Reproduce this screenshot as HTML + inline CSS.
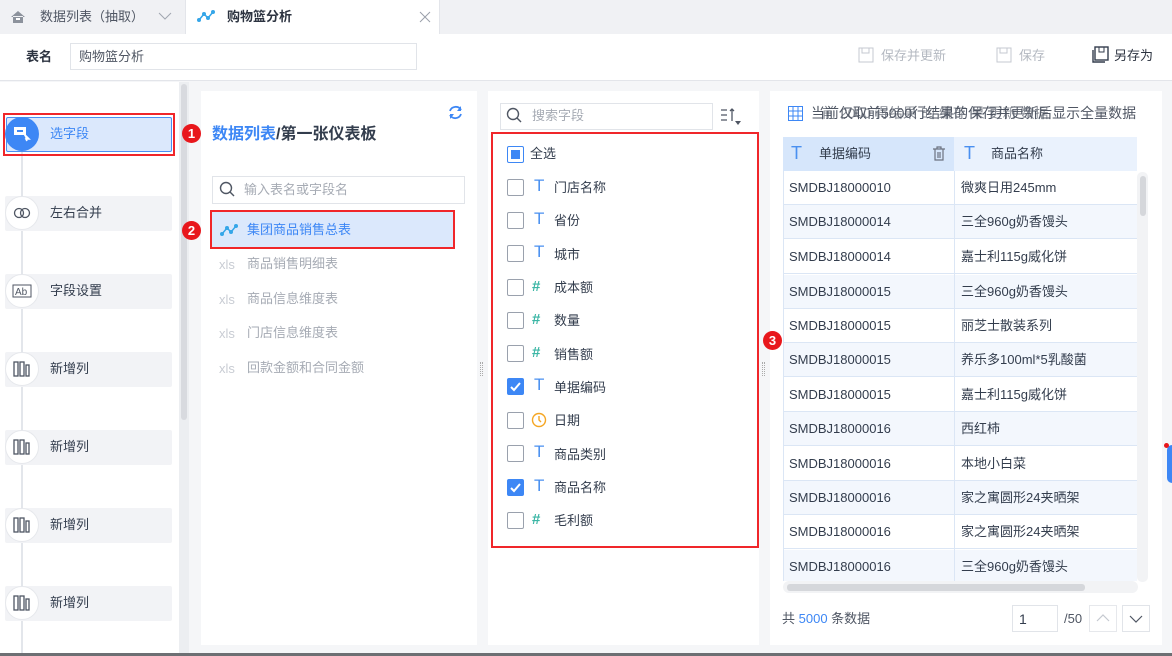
<!DOCTYPE html>
<html><head><meta charset="utf-8"><style>
*{box-sizing:border-box;margin:0;padding:0}
body{width:1172px;height:656px;overflow:hidden;position:relative;background:#f5f6f8;font-family:"Liberation Sans","Noto Sans CJK SC",sans-serif;font-size:13px;line-height:16px;color:#333d4d}
.a{position:absolute}
.tabbar{left:0;top:0;width:1172px;height:34px;background:#f0f1f4}
.hdr{left:0;top:34px;width:1172px;height:47px;background:#fff;border-bottom:1px solid #e3e5ea}
.step{left:5px;width:167px;height:35px;background:#f2f3f6;border-radius:2px}
.circ{left:5px;width:34px;height:34px;border-radius:50%;background:#fff;border:1px solid #e6e8ec;display:flex;align-items:center;justify-content:center}
.slab{left:50px;font-size:13px;color:#333d4d}
.red{border:2px solid #f0262a}
.badge{width:19px;height:19px;border-radius:50%;background:#e8171c;color:#fff;font-size:13px;text-align:center;line-height:19px;font-weight:bold;z-index:5}
.cb{left:507px;width:17px;height:17px;border:1px solid #9aa1ad;border-radius:2px;background:#fff}
.cbk{background:#3d87f5;border-color:#3d87f5}
.ti{left:534px;font-size:17px;color:#4a90f0;font-family:"Liberation Sans",sans-serif}
.hs{left:532px;font-size:15px;color:#3bb6a5;font-weight:bold}
.fl{left:554px;color:#333d4d}
.row{left:783px;width:354px;height:34px;border-bottom:1px solid #dbe6f5}
.row span{position:absolute;top:9px}
.xl{left:219px;color:#c8ccd3;font-size:13px}
.xt{left:247px;color:#a6abb4}
</style></head><body>
<div class="a tabbar"></div>
<div class="a" style="left:0;top:0;width:186px;height:34px;background:#f0f1f4;border-right:1px solid #e3e5ea"></div>
<svg class="a" style="left:10px;top:10px" width="16" height="14"><path d="M1 7 L8 1 L15 7 M3 6 V13 H13 V6" fill="#8c929c"/><rect x="6" y="8" width="4" height="2" fill="#fff"/></svg>
<div class="a" style="left:40px;top:9px;color:#4f5663">数据列表（抽取）</div>
<svg class="a" style="left:158px;top:12px" width="14" height="9"><path d="M1 1 L7 7 L13 1" stroke="#a0a6b0" fill="none"/></svg>
<div class="a" style="left:186px;top:0;width:254px;height:34px;background:#fff;border-right:1px solid #e3e5ea"></div>
<svg class="a" style="left:197px;top:9px" width="18" height="14"><path d="M2 11 L7 5 L11 9 L16 3" stroke="#35a6e8" stroke-width="1.5" fill="none"/><circle cx="2" cy="11" r="2" fill="#35a6e8"/><circle cx="7" cy="5" r="2" fill="#35a6e8"/><circle cx="11" cy="9" r="2" fill="#35a6e8"/><circle cx="16" cy="3" r="2" fill="#35a6e8"/></svg>
<div class="a" style="left:227px;top:9px;font-weight:bold;color:#2c3340">购物篮分析</div>
<svg class="a" style="left:419px;top:11px" width="12" height="12"><path d="M1 1 L11 11 M11 1 L1 11" stroke="#9aa0aa"/></svg>

<div class="a hdr"></div>
<div class="a" style="left:26px;top:49px;font-weight:bold;color:#2c3340">表名</div>
<div class="a" style="left:70px;top:43px;width:347px;height:27px;border:1px solid #e1e4e9;padding:5px 8px;color:#4f5663">购物篮分析</div>
<svg class="a" style="left:858px;top:47px" width="16" height="16"><rect x="1" y="1" width="14" height="14" fill="none" stroke="#c5c9d0"/><rect x="4" y="1" width="7" height="5" fill="none" stroke="#c5c9d0"/></svg>
<div class="a" style="left:881px;top:48px;color:#b4b9c1">保存并更新</div>
<svg class="a" style="left:996px;top:47px" width="16" height="16"><rect x="1" y="1" width="14" height="14" fill="none" stroke="#c5c9d0"/><rect x="4" y="1" width="7" height="5" fill="none" stroke="#c5c9d0"/></svg>
<div class="a" style="left:1019px;top:48px;color:#b4b9c1">保存</div>
<svg class="a" style="left:1092px;top:46px" width="17" height="17"><rect x="3" y="1" width="13" height="13" fill="none" stroke="#333d4d" stroke-width="1.4"/><path d="M1 4 V16 H13" fill="none" stroke="#333d4d" stroke-width="1.4"/><rect x="7" y="1" width="5" height="5" fill="none" stroke="#333d4d"/></svg>
<div class="a" style="left:1114px;top:48px;color:#2c3340">另存为</div>

<!-- left column -->
<div class="a" style="left:0;top:82px;width:179px;height:571px;background:#fff"></div>
<div class="a" style="left:179px;top:82px;width:10px;height:571px;background:#eceef1"></div>
<div class="a" style="left:181px;top:84px;width:6px;height:336px;background:#d8dadf;border-radius:3px"></div>
<div class="a" style="left:21px;top:140px;width:2px;height:513px;background:#e3e6eb"></div>

<div class="a red" style="left:3px;top:113px;width:172px;height:43px"></div>
<div class="a" style="left:6px;top:117px;width:166px;height:35px;background:#dbe8fc;border:1px solid #4a8ef2;border-radius:2px"></div>
<div class="a" style="left:5px;top:117px;width:34px;height:34px;border-radius:50%;background:#3d87f5"></div>
<svg class="a" style="left:13px;top:126px" width="18" height="16"><rect x="1" y="1" width="12" height="8" fill="#fff"/><rect x="4" y="4" width="6" height="2" fill="#3d87f5"/><path d="M10 7 L16 13 L13 13 L14 15" stroke="#fff" stroke-width="1.6" fill="#fff"/></svg>
<div class="a slab" style="top:126px;color:#3d87f5">选字段</div>

<div class="a step" style="top:196px"></div>
<div class="a circ" style="top:196px"><svg width="18" height="12"><circle cx="6" cy="6" r="4.5" fill="none" stroke="#4f5663" stroke-width="1.3"/><circle cx="12" cy="6" r="4.5" fill="none" stroke="#4f5663" stroke-width="1.3"/></svg></div>
<div class="a slab" style="top:205px">左右合并</div>

<div class="a step" style="top:274px"></div>
<div class="a circ" style="top:274px"><svg width="20" height="14"><rect x="1" y="1" width="18" height="12" fill="none" stroke="#4f5663"/><text x="3" y="11" font-size="10" fill="#4f5663" font-family="Liberation Sans">Ab</text></svg></div>
<div class="a slab" style="top:283px">字段设置</div>

<div class="a step" style="top:352px"></div>
<div class="a circ" style="top:352px"><svg width="18" height="16"><rect x="1" y="1" width="4" height="14" fill="none" stroke="#4f5663" stroke-width="1.3"/><rect x="7" y="1" width="4" height="14" fill="none" stroke="#4f5663" stroke-width="1.3"/><rect x="13" y="4" width="3" height="11" fill="none" stroke="#4f5663" stroke-width="1.3"/></svg></div>
<div class="a slab" style="top:361px">新增列</div>
<div class="a step" style="top:430px"></div>
<div class="a circ" style="top:430px"><svg width="18" height="16"><rect x="1" y="1" width="4" height="14" fill="none" stroke="#4f5663" stroke-width="1.3"/><rect x="7" y="1" width="4" height="14" fill="none" stroke="#4f5663" stroke-width="1.3"/><rect x="13" y="4" width="3" height="11" fill="none" stroke="#4f5663" stroke-width="1.3"/></svg></div>
<div class="a slab" style="top:439px">新增列</div>
<div class="a step" style="top:508px"></div>
<div class="a circ" style="top:508px"><svg width="18" height="16"><rect x="1" y="1" width="4" height="14" fill="none" stroke="#4f5663" stroke-width="1.3"/><rect x="7" y="1" width="4" height="14" fill="none" stroke="#4f5663" stroke-width="1.3"/><rect x="13" y="4" width="3" height="11" fill="none" stroke="#4f5663" stroke-width="1.3"/></svg></div>
<div class="a slab" style="top:517px">新增列</div>
<div class="a step" style="top:586px"></div>
<div class="a circ" style="top:586px"><svg width="18" height="16"><rect x="1" y="1" width="4" height="14" fill="none" stroke="#4f5663" stroke-width="1.3"/><rect x="7" y="1" width="4" height="14" fill="none" stroke="#4f5663" stroke-width="1.3"/><rect x="13" y="4" width="3" height="11" fill="none" stroke="#4f5663" stroke-width="1.3"/></svg></div>
<div class="a slab" style="top:595px">新增列</div>

<!-- panel 2 -->
<div class="a" style="left:201px;top:91px;width:276px;height:554px;background:#fff"></div>
<svg class="a" style="left:448px;top:105px" width="15" height="15"><path d="M2 6 A6 6 0 0 1 13 5 M13 9 A6 6 0 0 1 2 10" stroke="#3d87f5" stroke-width="1.8" fill="none"/><path d="M13 1 V6 H9" fill="#3d87f5"/><path d="M2 14 V9 H6" fill="#3d87f5"/></svg>
<div class="a badge" style="left:182px;top:124px">1</div>
<div class="a" style="left:212px;top:125px;font-size:16px;line-height:20px;font-weight:bold;color:#3d87f5">数据列表<span style="color:#333d4d">/第一张仪表板</span></div>
<div class="a" style="left:212px;top:176px;width:253px;height:28px;border:1px solid #e1e4e9"></div>
<svg class="a" style="left:219px;top:181px" width="17" height="17"><circle cx="7" cy="7" r="5.5" fill="none" stroke="#4f5663" stroke-width="1.4"/><path d="M11 11 L15 15" stroke="#4f5663" stroke-width="1.4"/></svg>
<div class="a" style="left:244px;top:182px;color:#a6abb4">输入表名或字段名</div>
<div class="a badge" style="left:182px;top:221px">2</div>
<div class="a red" style="left:210px;top:210px;width:245px;height:39px"></div>
<div class="a" style="left:212px;top:212px;width:241px;height:35px;background:#dbe8fc"></div>
<svg class="a" style="left:220px;top:223px" width="18" height="14"><path d="M2 11 L7 5 L11 9 L16 3" stroke="#35a6e8" stroke-width="1.5" fill="none"/><circle cx="2" cy="11" r="2" fill="#35a6e8"/><circle cx="7" cy="5" r="2" fill="#35a6e8"/><circle cx="11" cy="9" r="2" fill="#35a6e8"/><circle cx="16" cy="3" r="2" fill="#35a6e8"/></svg>
<div class="a" style="left:247px;top:222px;color:#3d87f5">集团商品销售总表</div>
<div class="a xl" style="top:257px">xls</div><div class="a xt" style="top:256px">商品销售明细表</div>
<div class="a xl" style="top:292px">xls</div><div class="a xt" style="top:291px">商品信息维度表</div>
<div class="a xl" style="top:326px">xls</div><div class="a xt" style="top:325px">门店信息维度表</div>
<div class="a xl" style="top:361px">xls</div><div class="a xt" style="top:360px">回款金额和合同金额</div>
<div class="a" style="left:480px;top:362px;width:3px;height:14px;border-left:1px dotted #aaa;border-right:1px dotted #aaa"></div>

<!-- panel 3 -->
<div class="a" style="left:488px;top:91px;width:271px;height:554px;background:#fff"></div>
<div class="a" style="left:500px;top:103px;width:213px;height:27px;border:1px solid #e1e4e9"></div>
<svg class="a" style="left:506px;top:107px" width="17" height="17"><circle cx="7" cy="7" r="5.5" fill="none" stroke="#4f5663" stroke-width="1.4"/><path d="M11 11 L15 15" stroke="#4f5663" stroke-width="1.4"/></svg>
<div class="a" style="left:532px;top:108px;color:#a6abb4">搜索字段</div>
<svg class="a" style="left:720px;top:107px" width="24" height="20"><path d="M1 3 H7 M1 8 H7 M1 13 H7" stroke="#4f5663" stroke-width="1.3"/><path d="M12 2 V14 M10 4 L12 2 L14 4" stroke="#4f5663" stroke-width="1.3" fill="none"/><path d="M15 14 L21 14 L18 18Z" fill="#4f5663"/></svg>
<div class="a red" style="left:491px;top:132px;width:268px;height:416px"></div>
<div class="a cb" style="top:146px;border-color:#3d87f5"><div style="margin:3px;width:9px;height:9px;background:#3d87f5"></div></div>
<div class="a" style="left:530px;top:146px">全选</div>
<div class="a cb" style="top:179px"></div><div class="a ti" style="top:178px">T</div><div class="a fl" style="top:180px">门店名称</div>
<div class="a cb" style="top:212px"></div><div class="a ti" style="top:211px">T</div><div class="a fl" style="top:213px">省份</div>
<div class="a cb" style="top:245px"></div><div class="a ti" style="top:244px">T</div><div class="a fl" style="top:247px">城市</div>
<div class="a cb" style="top:279px"></div><div class="a hs" style="top:279px">#</div><div class="a fl" style="top:280px">成本额</div>
<div class="a cb" style="top:312px"></div><div class="a hs" style="top:312px">#</div><div class="a fl" style="top:313px">数量</div>
<div class="a cb" style="top:345px"></div><div class="a hs" style="top:345px">#</div><div class="a fl" style="top:347px">销售额</div>
<div class="a cb cbk" style="top:378px"><svg width="15" height="15"><path d="M3 8 L6 11 L12 4" stroke="#fff" stroke-width="2" fill="none"/></svg></div><div class="a ti" style="top:377px">T</div><div class="a fl" style="top:380px">单据编码</div>
<div class="a cb" style="top:412px"></div><svg class="a" style="left:531px;top:412px" width="16" height="16"><circle cx="8" cy="8" r="6.5" fill="none" stroke="#f5a623" stroke-width="1.4"/><path d="M8 4 V8 L10 10" stroke="#f5a623" stroke-width="1.4" fill="none"/></svg><div class="a fl" style="top:413px">日期</div>
<div class="a cb" style="top:445px"></div><div class="a ti" style="top:444px">T</div><div class="a fl" style="top:447px">商品类别</div>
<div class="a cb cbk" style="top:479px"><svg width="15" height="15"><path d="M3 8 L6 11 L12 4" stroke="#fff" stroke-width="2" fill="none"/></svg></div><div class="a ti" style="top:478px">T</div><div class="a fl" style="top:480px">商品名称</div>
<div class="a cb" style="top:512px"></div><div class="a hs" style="top:512px">#</div><div class="a fl" style="top:513px">毛利额</div>
<div class="a" style="left:762px;top:362px;width:3px;height:14px;border-left:1px dotted #aaa;border-right:1px dotted #aaa"></div>

<!-- panel 4 -->
<div class="a" style="left:770px;top:91px;width:392px;height:554px;background:#fff"></div>
<div class="a badge" style="left:763px;top:331px">3</div>
<svg class="a" style="left:788px;top:106px" width="15" height="15"><rect x="0.5" y="0.5" width="14" height="14" fill="none" stroke="#3d87f5"/><path d="M5 0 V15 M10 0 V15 M0 5 H15 M0 10 H15" stroke="#3d87f5"/></svg>
<div class="a" style="left:811px;top:105px;color:#4f5663;font-size:14px">当前仅取前5000行结果的保存并更新后显示全量数据</div>
<div class="a" style="left:822px;top:105px;color:#4f5663;font-size:14px;opacity:.7">前 2000 得结果 的 编存 果 更新 数据</div>
<div class="a" style="left:783px;top:137px;width:354px;height:34px;background:#eaf2fd"></div>
<div class="a" style="left:783px;top:137px;width:171px;height:34px;background:#d6e6fb"></div>
<div class="a" style="left:791px;top:145px;color:#4a90f0;font-size:18px;font-family:'Liberation Sans',sans-serif">T</div>
<div class="a" style="left:819px;top:146px">单据编码</div>
<svg class="a" style="left:932px;top:146px" width="14" height="15"><path d="M1 3 H13 M5 3 V1 H9 V3 M3 3 V14 H11 V3 M6 6 V12 M8 6 V12" stroke="#6b7280" stroke-width="1.2" fill="none"/></svg>
<div class="a" style="left:964px;top:145px;color:#4a90f0;font-size:18px;font-family:'Liberation Sans',sans-serif">T</div>
<div class="a" style="left:991px;top:146px">商品名称</div>

<div class="a row" style="top:171px;background:#fff"><span style="left:6px">SMDBJ18000010</span><span style="left:178px">微爽日用245mm</span></div>
<div class="a row" style="top:205px;background:#f3f7fd"><span style="left:6px">SMDBJ18000014</span><span style="left:178px">三全960g奶香馒头</span></div>
<div class="a row" style="top:240px;background:#fff"><span style="left:6px">SMDBJ18000014</span><span style="left:178px">嘉士利115g威化饼</span></div>
<div class="a row" style="top:275px;background:#f3f7fd"><span style="left:6px">SMDBJ18000015</span><span style="left:178px">三全960g奶香馒头</span></div>
<div class="a row" style="top:309px;background:#fff"><span style="left:6px">SMDBJ18000015</span><span style="left:178px">丽芝士散装系列</span></div>
<div class="a row" style="top:343px;background:#f3f7fd"><span style="left:6px">SMDBJ18000015</span><span style="left:178px">养乐多100ml*5乳酸菌</span></div>
<div class="a row" style="top:378px;background:#fff"><span style="left:6px">SMDBJ18000015</span><span style="left:178px">嘉士利115g威化饼</span></div>
<div class="a row" style="top:412px;background:#f3f7fd"><span style="left:6px">SMDBJ18000016</span><span style="left:178px">西红柿</span></div>
<div class="a row" style="top:447px;background:#fff"><span style="left:6px">SMDBJ18000016</span><span style="left:178px">本地小白菜</span></div>
<div class="a row" style="top:481px;background:#f3f7fd"><span style="left:6px">SMDBJ18000016</span><span style="left:178px">家之寓圆形24夹晒架</span></div>
<div class="a row" style="top:515px;background:#fff"><span style="left:6px">SMDBJ18000016</span><span style="left:178px">家之寓圆形24夹晒架</span></div>
<div class="a row" style="top:550px;background:#f3f7fd;height:31px;border:none"><span style="left:6px;top:9px">SMDBJ18000016</span><span style="left:178px;top:9px">三全960g奶香馒头</span></div>
<div class="a" style="left:954px;top:171px;width:1px;height:410px;background:#dbe6f5"></div>
<div class="a" style="left:783px;top:171px;width:1px;height:410px;background:#dbe6f5"></div>
<div class="a" style="left:1137px;top:172px;width:11px;height:410px;background:#f2f3f5;border-radius:5px"></div>
<div class="a" style="left:1140px;top:176px;width:6px;height:40px;background:#d5d7db;border-radius:3px"></div>
<div class="a" style="left:783px;top:581px;width:355px;height:12px;background:#f2f3f5;border-radius:6px"></div>
<div class="a" style="left:787px;top:584px;width:298px;height:7px;background:#d5d7db;border-radius:3px"></div>

<div class="a" style="left:782px;top:611px;color:#4f5663">共 <span style="color:#3d87f5">5000</span> 条数据</div>
<div class="a" style="left:1012px;top:605px;width:46px;height:27px;border:1px solid #e1e4e9;padding:5px 6px;font-size:14px">1</div>
<div class="a" style="left:1064px;top:611px;color:#4f5663">/50</div>
<div class="a" style="left:1089px;top:605px;width:28px;height:27px;border:1px solid #e6e8ec"><svg width="26" height="25"><path d="M7 15 L13 9 L19 15" stroke="#c5c9d0" fill="none" stroke-width="1.2"/></svg></div>
<div class="a" style="left:1122px;top:605px;width:28px;height:27px;border:1px solid #e1e4e9"><svg width="26" height="25"><path d="M7 10 L13 16 L19 10" stroke="#4f5663" fill="none" stroke-width="1.2"/></svg></div>
<div class="a" style="left:1167px;top:445px;width:10px;height:38px;border-radius:8px;background:#3d87f5"></div>
<div class="a" style="left:1164px;top:443px;width:5px;height:5px;border-radius:50%;background:#e8171c"></div>
<div class="a" style="left:0;top:653px;width:1172px;height:3px;background:#6d6f73"></div>
</body></html>
